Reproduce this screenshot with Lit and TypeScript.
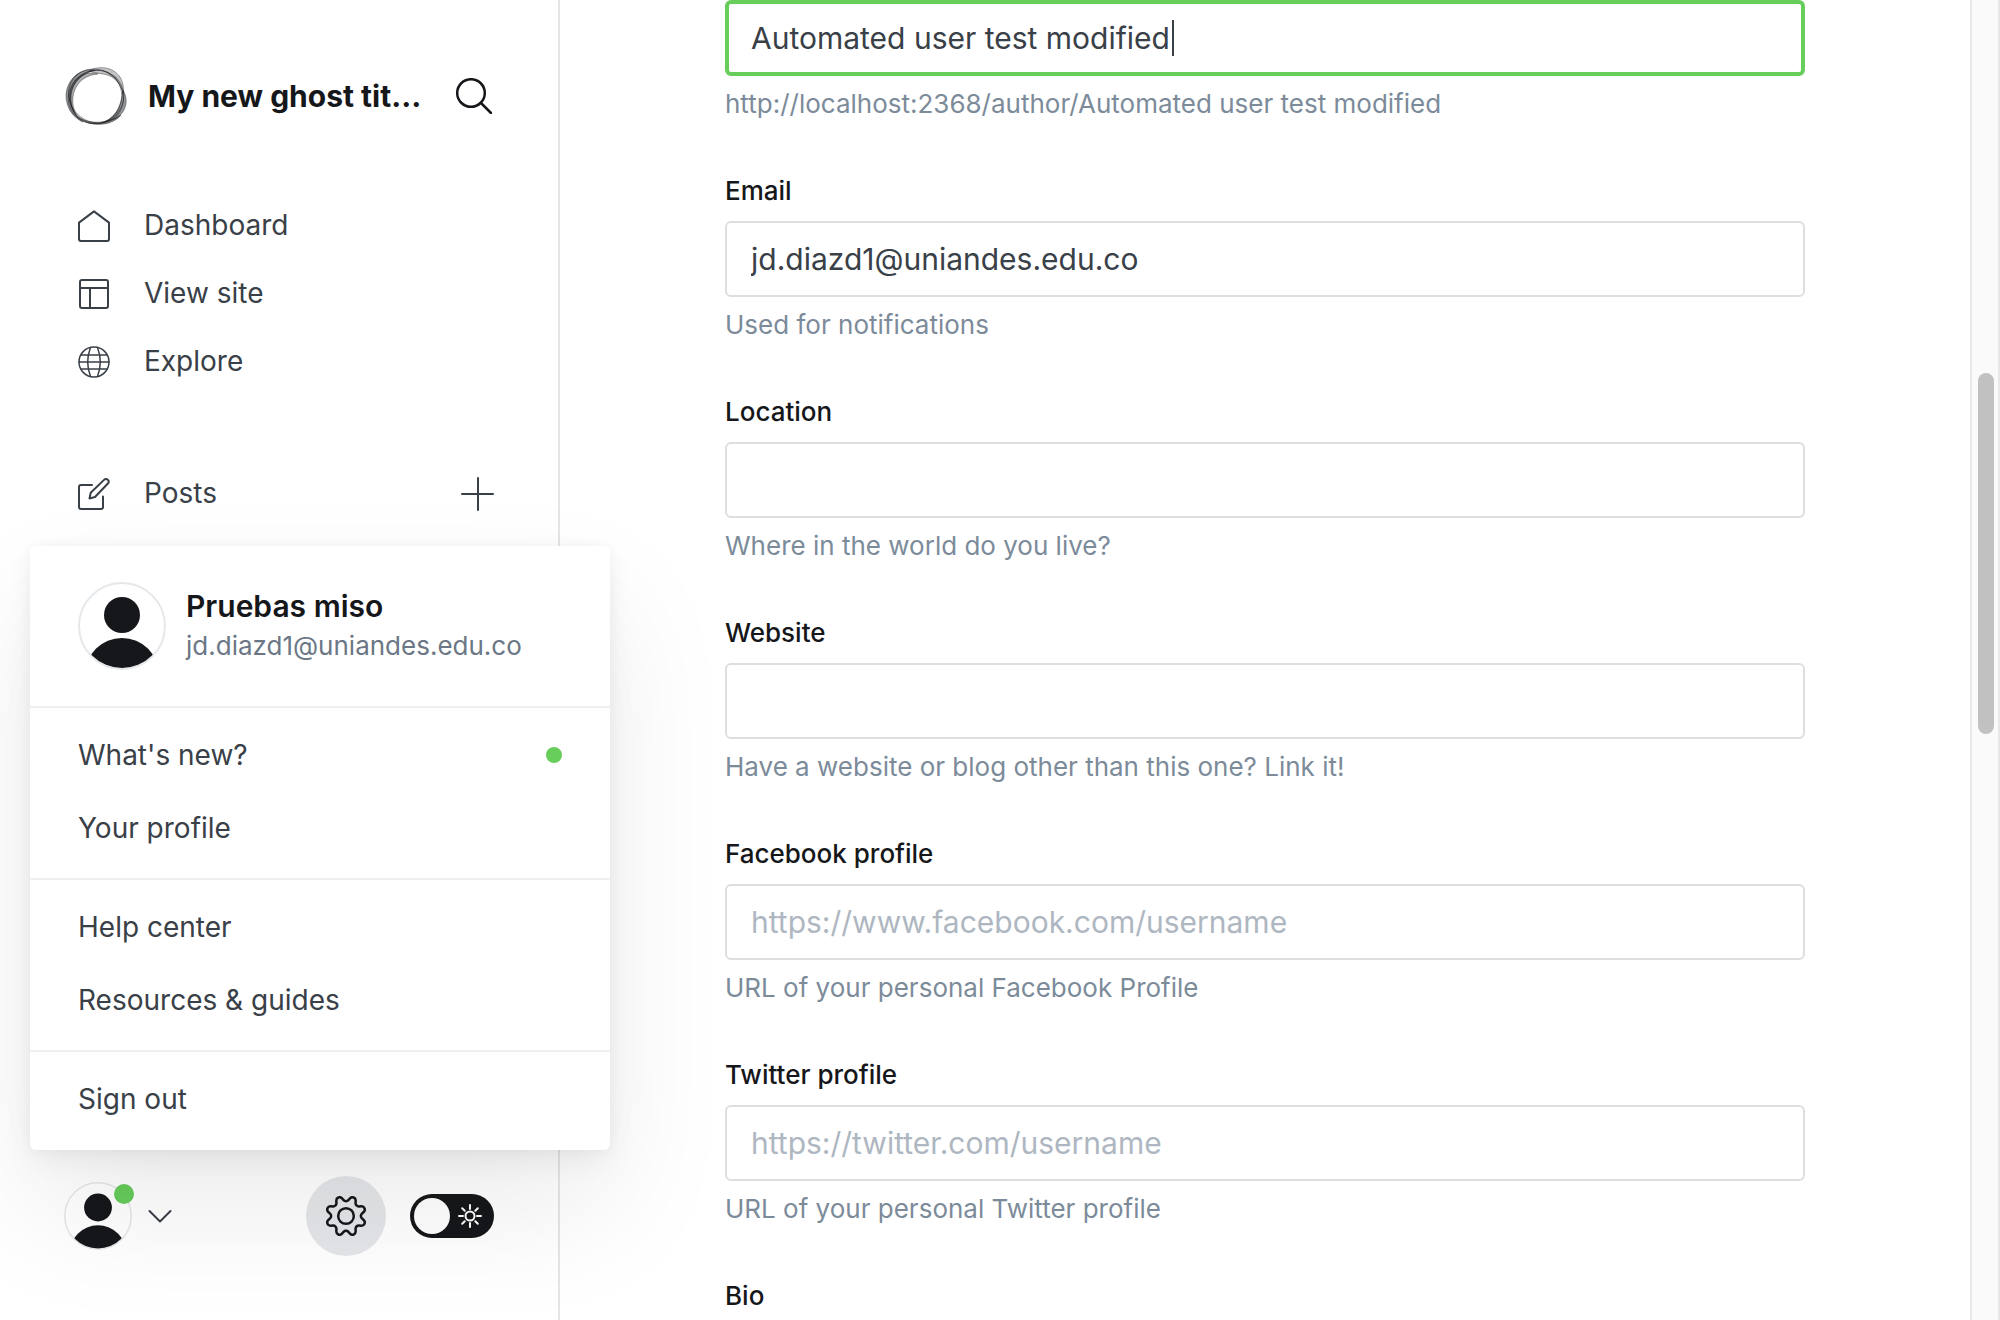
import { LitElement, html, css, svg, nothing } from "lit";
import { customElement } from "lit/decorators.js";

interface Field {
  id: string;
  label: string;
  type: string;
  value?: string;
  placeholder?: string;
  help: string;
}

const FIELDS: Field[] = [
  { id: "email", label: "Email", type: "email", value: "jd.diazd1@uniandes.edu.co", help: "Used for notifications" },
  { id: "location", label: "Location", type: "text", help: "Where in the world do you live?" },
  { id: "website", label: "Website", type: "url", help: "Have a website or blog other than this one? Link it!" },
  {
    id: "facebook",
    label: "Facebook profile",
    type: "url",
    placeholder: "https://www.facebook.com/username",
    help: "URL of your personal Facebook Profile",
  },
  {
    id: "twitter",
    label: "Twitter profile",
    type: "url",
    placeholder: "https://twitter.com/username",
    help: "URL of your personal Twitter profile",
  },
];

const HOME = svg`<path d="M1 12.6 16 1.4l15 11.2V29a2 2 0 0 1-2 2H3a2 2 0 0 1-2-2z"/>`;
const LAYOUT = svg`<rect x="2" y="2" width="28" height="28" rx="2"/><path d="M2 10h28M12 10v20"/>`;
const GLOBE = svg`<g stroke-width="1.5"><circle cx="16" cy="16" r="15"/><path d="M1 16h30M3 9h26M3 23h26M12.500 1.500c-3.500 9-3.500 20 0 29M19.500 1.500c3.500 9 3.500 20 0 29"/></g>`;
const POSTS = svg`<path d="M14 7H3a2 2 0 0 0-2 2v20a2 2 0 0 0 2 2h20a2 2 0 0 0 2-2V18.500"/><path d="M11.500 20.500l1.200-5.700L26 1.900a2.600 2.600 0 0 1 3.900 3.600L17 19z"/>`;

const person = (size: number) => html`
  <svg class="avatar" width=${size} height=${size} viewBox="0 0 88 88" aria-hidden="true">
    <defs><clipPath id="disc"><circle cx="44" cy="44" r="42" /></clipPath></defs>
    <circle cx="44" cy="44" r="43" fill="none" stroke="#e5e8eb" stroke-width="2" />
    <g clip-path="url(#disc)" fill="#15171a">
      <circle cx="44" cy="33" r="18" />
      <circle cx="44" cy="93" r="37" />
    </g>
  </svg>
`;

@customElement("app-root")
export class AppRoot extends LitElement {
  static styles = css`
    :host {
      display: block;
      color: #394047;
      font-family: Inter, "Liberation Sans", sans-serif;
      font-size: 28px;
      line-height: 36px;
    }
    * { box-sizing: border-box; }
    a { color: inherit; text-decoration: none; }
    button { padding: 0; border: 0; background: none; color: inherit; font: inherit; cursor: pointer; }
    svg { display: block; flex: none; }
    .line { fill: none; stroke: currentColor; stroke-width: 2; stroke-linecap: round; stroke-linejoin: round; }

    .app { display: flex; height: 100vh; overflow: hidden; background: #fff; }

    .sidebar {
      display: flex;
      flex: none;
      flex-direction: column;
      width: 560px;
      padding: 66px 64px 64px;
      border-right: 2px solid #e6e6e6;
    }
    .brand { display: flex; align-items: center; height: 60px; margin-bottom: 66px; color: #15171a; }
    .title {
      flex: 1;
      min-width: 0;
      margin: 0 30px 0 20px;
      overflow: hidden;
      font-size: 30px;
      font-weight: 700;
      white-space: nowrap;
    }
    .search { margin-right: 2px; }
    .nav { display: flex; flex-direction: column; }
    .nav + .nav { margin-top: 64px; }
    .row { display: flex; align-items: center; height: 68px; padding-left: 14px; }
    .link { display: flex; flex: 1; align-items: center; gap: 34px; }
    .text { padding-bottom: 2px; }

    .footer { display: flex; align-items: center; height: 80px; margin-top: auto; }
    .account { position: relative; display: flex; align-items: center; gap: 16px; margin-right: auto; }
    .badge {
      position: absolute;
      top: 2px;
      left: 50px;
      width: 20px;
      height: 20px;
      border-radius: 50%;
      background: #66cc5a;
    }
    .gear {
      display: flex;
      align-items: center;
      justify-content: center;
      width: 80px;
      height: 80px;
      margin-right: 24px;
      border-radius: 50%;
      background: #e5e6e9;
      color: #15171a;
    }
    .switch {
      position: relative;
      display: flex;
      align-items: center;
      justify-content: space-between;
      width: 84px;
      height: 44px;
      padding: 4px 12px 4px 4px;
      border-radius: 22px;
      background: #15171a;
      color: #fff;
    }
    .check { position: absolute; inset: 0; width: 100%; height: 100%; margin: 0; opacity: 0; cursor: pointer; }
    .knob { width: 36px; height: 36px; border-radius: 50%; background: #fff; }

    .menu {
      position: absolute;
      bottom: 170px;
      left: 30px;
      width: 580px;
      padding-bottom: 1px;
      border-radius: 6px;
      background: #fff;
      box-shadow: 0 0 14px rgba(0, 0, 0, 0.04), 0 12px 28px rgba(0, 0, 0, 0.05), 0 60px 130px rgba(0, 0, 0, 0.08);
    }
    .profile { display: flex; align-items: center; gap: 20px; height: 160px; padding: 0 48px; }
    .name { color: #15171a; font-size: 30px; font-weight: 600; line-height: 40px; }
    .mail { color: #6b7785; font-size: 26px; line-height: 40px; }
    .group { padding: 10px 0 14px; border-top: 2px solid #eeefef; }
    .item { display: flex; align-items: center; justify-content: space-between; height: 73px; padding: 0 48px; }
    .dot { width: 16px; height: 16px; border-radius: 50%; background: #68ce5b; }

    .main { flex: 1; min-width: 0; overflow: hidden; }
    .form { display: flex; flex-direction: column; gap: 59px; max-width: 1080px; margin: 0 auto; }
    .field { display: flex; flex-direction: column; }
    .label { margin-bottom: 16px; color: #15171a; font-size: 26px; font-weight: 500; line-height: 28px; }
    .box { position: relative; display: flex; }
    .input {
      width: 100%;
      height: 76px;
      padding: 0 24px;
      border: 2px solid #dddedf;
      border-radius: 6px;
      outline: none;
      background: #fff;
      color: #394047;
      font: inherit;
      font-size: 30px;
    }
    .input::placeholder { color: #aeb7c1; opacity: 1; }
    .active { padding: 0 22px; border: 4px solid #68ce5b; }
    .caret { position: absolute; top: 20px; left: 447px; width: 2px; height: 36px; background: #394047; }
    .help { margin: 14px 0 0; color: #7c8b9a; font-size: 26px; line-height: 28px; }

    .scroll { flex: none; width: 30px; padding: 373px 4px 0 6px; border: solid #e8e8e8; border-width: 0 2px; background: #fafafa; }
    .thumb { height: 361px; border-radius: 8px; background: #c1c1c1; }
  `;

  private navLink(icon: unknown, text: string) {
    return html`
      <a class="link" href="#">
        <svg class="line" width="32" height="32" viewBox="0 0 32 32" aria-hidden="true">${icon}</svg>
        <span class="text">${text}</span>
      </a>
    `;
  }

  private sidebar() {
    return html`
      <aside class="sidebar">
        <div class="brand">
          <svg width="64" height="60" viewBox="-1 0 64 60" fill="none" stroke="#15171a" aria-hidden="true">
            <g fill="#15171a" stroke-opacity=".5" stroke-width=".8">
              <path fill-opacity=".25" d="M24 5C34-1 48 1 55 11c3 5 4 11 3 17-1-7-5-13-11-17C40 7 33 8 24 5z" />
              <path fill-opacity=".45" d="M58 24c6 10 3 21-5 27-4 3-9 4-13 5 5-3 10-7 13-13 3-6 4-12 5-19z" />
              <path fill-opacity=".5" d="M12 50c7 7 17 9 27 8 7-1 13-4 17-9-7 4-12 6-20 7-9 1-17-1-24-6z" />
              <path fill-opacity=".45" d="M30 4C14 2 2 14 1 29c0 12 6 22 17 27C9 50 6 41 6 32 6 18 16 8 30 4z" />
              <path fill-opacity=".35" d="M33 8C20 4 8 13 5 25c-2 9 1 18 7 25C7 41 7 33 9 26 13 14 22 9 33 8z" />
            </g>
            <g stroke-opacity=".45">
              <ellipse cx="31" cy="31" rx="28" ry="26.500" transform="rotate(-25 31 31)" />
              <ellipse cx="31" cy="30" rx="28.500" ry="26" transform="rotate(40 31 30)" />
              <ellipse cx="31" cy="31" rx="27" ry="25.500" transform="rotate(115 31 31)" />
            </g>
          </svg>
          <span class="title">My new ghost tit…</span>
          <button class="search" aria-label="Search">
            <svg class="line" width="36" height="36" viewBox="0 0 36 36" aria-hidden="true">
              <g stroke-width="2.500"><circle cx="15" cy="15" r="13.800" /><path d="M25 25l10 10" /></g>
            </svg>
          </button>
        </div>
        <nav class="nav">
          <div class="row">${this.navLink(HOME, "Dashboard")}</div>
          <div class="row">${this.navLink(LAYOUT, "View site")}</div>
          <div class="row">${this.navLink(GLOBE, "Explore")}</div>
        </nav>
        <nav class="nav">
          <div class="row">
            ${this.navLink(POSTS, "Posts")}
            <button aria-label="New post">
              <svg class="line" width="34" height="34" viewBox="0 0 34 34" aria-hidden="true"><path d="M18 1v32M2 17h31" /></svg>
            </button>
          </div>
        </nav>
        <div class="footer">
          <button class="account" aria-label="Account menu" aria-expanded="true">
            ${person(68)}
            <span class="badge"></span>
            <svg class="line" width="24" height="14" viewBox="0 0 24 14" aria-hidden="true"><path d="M1.500 2 12 12.500 22.500 2" /></svg>
          </button>
          <a class="gear" href="#" aria-label="Settings">
            <svg class="line" width="40" height="40" viewBox="0 0 24 24" aria-hidden="true">
              <g stroke-width="1.500">
                <circle cx="12" cy="12" r="4.700" />
                <path d="M10.546 2.438a1.957 1.957 0 0 0 2.908 0L14.400 1.400a1.959 1.959 0 0 1 3.410 1.413l-.071 1.400A1.958 1.958 0 0 0 19.790 6.266l1.400-.071A1.959 1.959 0 0 1 22.600 9.600l-1.042.940a1.960 1.960 0 0 0 0 2.909l1.042.940a1.959 1.959 0 0 1-1.413 3.410l-1.400-.071a1.958 1.958 0 0 0-2.056 2.056l.071 1.400A1.959 1.959 0 0 1 14.400 22.600l-.941-1.041a1.959 1.959 0 0 0-2.908 0L9.606 22.600A1.959 1.959 0 0 1 6.192 21.192l.072-1.400a1.958 1.958 0 0 0-2.056-2.056l-1.400.071A1.958 1.958 0 0 1 1.400 14.400l1.041-.940a1.960 1.960 0 0 0 0-2.909L1.400 9.606A1.958 1.958 0 0 1 2.809 6.192l1.400.071A1.958 1.958 0 0 0 6.264 4.209l-.072-1.400A1.959 1.959 0 0 1 9.606 1.400z" />
              </g>
            </svg>
          </a>
          <label class="switch">
            <input class="check" type="checkbox" aria-label="Dark mode" />
            <span class="knob"></span>
            <svg class="line" width="24" height="24" viewBox="0 0 24 24" aria-hidden="true">
              <circle cx="12" cy="12" r="4.500" />
              <path d="M12 1v4M12 19v4M1 12h4M19 12h4M4.200 4.200l2.500 2.500M17.300 17.300l2.500 2.500M4.200 19.800l2.500-2.500M17.300 6.700l2.500-2.500" />
            </svg>
          </label>
        </div>
      </aside>
    `;
  }

  private menu() {
    return html`
      <div class="menu">
        <div class="profile">
          ${person(88)}
          <div>
            <div class="name">Pruebas miso</div>
            <div class="mail">jd.diazd1@uniandes.edu.co</div>
          </div>
        </div>
        <div class="group">
          <a class="item" href="#">What's new?<span class="dot"></span></a>
          <a class="item" href="#">Your profile</a>
        </div>
        <div class="group">
          <a class="item" href="#">Help center</a>
          <a class="item" href="#">Resources &amp; guides</a>
        </div>
        <div class="group"><a class="item" href="#">Sign out</a></div>
      </div>
    `;
  }

  render() {
    return html`
      <div class="app">
        ${this.sidebar()}
        <main class="main">
          <form class="form">
            <div class="field">
              <div class="box">
                <input class="input active" type="text" aria-label="Slug" aria-describedby="slug-help" .value=${"Automated user test modified"} />
                <span class="caret"></span>
              </div>
              <p class="help" id="slug-help">http://localhost:2368/author/Automated user test modified</p>
            </div>
            ${FIELDS.map(
              (f) => html`
                <div class="field">
                  <label class="label" for=${f.id}>${f.label}</label>
                  <input class="input" id=${f.id} type=${f.type} .value=${f.value ?? ""} placeholder=${f.placeholder ?? nothing} />
                  <p class="help">${f.help}</p>
                </div>
              `
            )}
            <div class="field">
              <label class="label" for="bio">Bio</label>
              <textarea class="input" id="bio"></textarea>
            </div>
          </form>
        </main>
        <div class="scroll"><div class="thumb"></div></div>
        ${this.menu()}
      </div>
    `;
  }
}
